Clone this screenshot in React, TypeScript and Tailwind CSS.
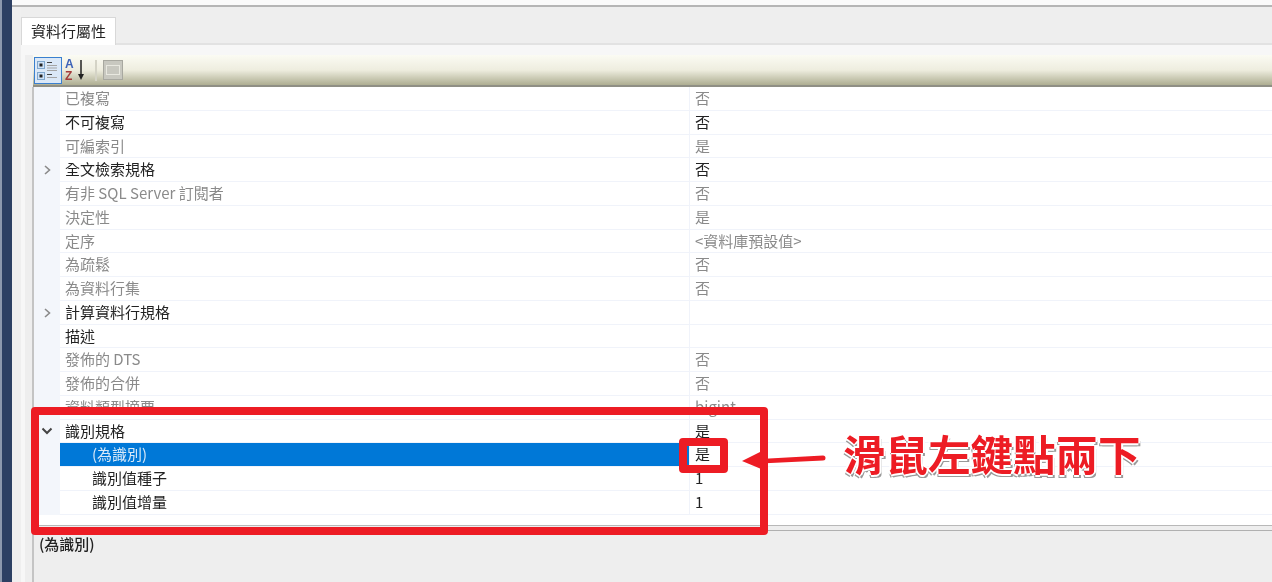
import React from 'react';

type Row = { name: string; value?: string; dim?: boolean; arrow?: 'right' | 'down'; child?: boolean; selected?: boolean };

const rows: Row[] = [
  { name: '已複寫', value: '否', dim: true },
  { name: '不可複寫', value: '否' },
  { name: '可編索引', value: '是', dim: true },
  { name: '全文檢索規格', value: '否', arrow: 'right' },
  { name: '有非 SQL Server 訂閱者', value: '否', dim: true },
  { name: '決定性', value: '是', dim: true },
  { name: '定序', value: '<資料庫預設值>', dim: true },
  { name: '為疏鬆', value: '否', dim: true },
  { name: '為資料行集', value: '否', dim: true },
  { name: '計算資料行規格', arrow: 'right' },
  { name: '描述' },
  { name: '發佈的 DTS', value: '否', dim: true },
  { name: '發佈的合併', value: '否', dim: true },
  { name: '資料類型摘要', value: 'bigint', dim: true },
  { name: '識別規格', value: '是', arrow: 'down' },
  { name: '(為識別)', value: '是', child: true, selected: true },
  { name: '識別值種子', value: '1', child: true },
  { name: '識別值增量', value: '1', child: true },
];

const PropRow = ({ row }: { row: Row }) => (
  <div className="flex h-[23.76px] text-[15px] leading-[22.76px]">
    <div className="w-[26px] shrink-0 flex items-center justify-center bg-[#f3f6fb]">
      {row.arrow === 'right' && (
        <svg width="10" height="12" viewBox="0 0 10 12" fill="none" stroke="#8a8a8a" strokeWidth="1.6">
          <path d="M3 2l4.5 4L3 10" />
        </svg>
      )}
      {row.arrow === 'down' && (
        <svg width="12" height="10" viewBox="0 0 12 10" fill="none" stroke="#444" strokeWidth="2">
          <path d="M1.5 2.5L6 7l4.5-4.5" />
        </svg>
      )}
    </div>
    <div
      className={
        'w-[629px] shrink-0 border-b border-[#f0f3fa] ' +
        (row.child ? 'pl-[32px] ' : 'pl-[5px] ') +
        (row.selected ? 'bg-[#0078d7] text-[#d8e9f8]' : row.dim ? 'text-[#8a8a8a]' : 'text-[#222]')
      }
    >
      {row.name}
    </div>
    <div
      className={
        'flex-1 border-b border-l border-[#f0f3fa] pl-[5px] ' +
        (row.dim ? 'text-[#8a8a8a]' : 'text-[#222]')
      }
    >
      {row.value}
    </div>
  </div>
);

export default function App() {
  return (
    <div
      className="relative flex w-[1272px] h-[582px] overflow-hidden bg-[#eeeeee] blur-[0.4px]"
      style={{ fontFamily: '"Noto Sans CJK TC", "Liberation Sans", sans-serif' }}
    >
      <div className="w-[2px] shrink-0 bg-[#8d99ad]" />
      <div className="w-[10px] shrink-0 bg-[#2d4063]" />
      <div className="w-[9px] shrink-0 bg-[#efefef]" />

      <div className="flex-1 flex flex-col min-w-0">
        <div className="h-[7px] shrink-0 -ml-[9px] bg-[#fafafa] border-b-2 border-[#b5b5b5]" />
        <div className="h-[38px] shrink-0 flex items-end border-b-2 border-[#e2e2e2]">
          <div className="h-[28px] w-[95px] -mb-[2px] bg-white border border-b-0 border-[#d8d8d8] text-[15px] leading-[25px] text-[#222] text-center">
            資料行屬性
          </div>
        </div>

        <div className="flex-1 flex flex-col min-h-0 border-l-4 border-[#f7f7f7] bg-[#eeeeee]">
          <div className="h-[10px] shrink-0 bg-[#f7f7f7]" />
          <div className="flex-1 flex flex-col min-h-0 ml-[8px]">
            <div className="h-[32px] shrink-0 flex items-center bg-gradient-to-b from-[#fbfbf3] via-[#eeeddf] to-[#aeae92] border-b-2 border-[#8f8f85]">
              <div className="ml-[1px] w-[28px] h-[27px] border border-[#3a7fd0] bg-[#dbe8f7] flex items-center justify-center">
                <svg width="22" height="22" viewBox="0 0 22 22">
                  <rect x="0.5" y="2.5" width="7" height="7" fill="#cfe2f7" stroke="#7fa6cc" />
                  <rect x="2.5" y="4.5" width="3" height="3" fill="#222" />
                  <rect x="0.5" y="13.5" width="7" height="7" fill="#cfe2f7" stroke="#7fa6cc" />
                  <rect x="2.5" y="15.5" width="3" height="3" fill="#222" />
                  <path d="M10 3.5h5M10 15.5h5" stroke="#444" strokeWidth="1" />
                  <path d="M10 6.5h10M10 9h10M10 11.5h10M10 18.5h10" stroke="#a5a5a5" strokeWidth="1" />
                </svg>
              </div>
              <svg width="26" height="30" viewBox="0 0 26 30" className="ml-[2px]">
                <text x="1" y="13" fontSize="12" fontWeight="700" fill="#3c62b8" fontFamily="Liberation Sans">A</text>
                <text x="1" y="25" fontSize="12" fontWeight="700" fill="#a33a3a" fontFamily="Liberation Sans">Z</text>
                <path d="M17 5v17" stroke="#222" strokeWidth="1.5" />
                <path d="M14 19l3 6 3-6z" fill="#222" />
              </svg>
              <div className="ml-[5px] w-[2px] h-[21px] bg-[#d4d3c6]" />
              <div className="ml-[6px] w-5 h-5 bg-[#c8c8c0] border border-[#a8a8a0] flex items-center justify-center">
                <div className="w-[14px] h-[10px] border border-[#e8e8e0]" />
              </div>
            </div>

            <div className="flex-1 flex flex-col min-h-0 border-l-2 border-[#c4c4c4] -ml-[1px]">
              <div className="h-[439px] shrink-0 bg-white border-b border-[#b8b8b8]">
                {rows.map((row) => (
                  <PropRow key={row.name} row={row} />
                ))}
              </div>
              <div className="flex-1 mt-[4px] pt-[3px] pl-[5px] border-t border-[#b0b0b0] text-[15px] leading-5 font-medium text-[#222]">
                (為識別)
              </div>
            </div>
          </div>
        </div>
      </div>

      <div className="absolute left-[31px] top-[407px] w-[737px] h-[128px] border-8 border-[#ed1c24] rounded-[4px]" />
      <div className="absolute left-[679px] top-[438px] w-[49px] h-[35px] border-8 border-[#ed1c24] rounded-[4px]" />

      <svg className="absolute left-[736px] top-[444px]" width="92" height="30" viewBox="0 0 92 30">
        <path d="M6 17L24 8v7L87 11.5a2.5 2.5 0 0 1 0 5L24 19.5v5z" fill="#ed1c24" />
      </svg>

      <div
        className="absolute left-[843px] top-[425px] text-[42.5px] leading-[56px] font-bold text-[#ed1c24] whitespace-nowrap"
        style={{ textShadow: '2px 0 0 #fff, -2px 0 0 #fff, 0 -2px 0 #fff, 0 2px 0 #fff, 2px 3px 0 #9a9a9a, -1px 3px 0 #9a9a9a' }}
      >
        滑鼠左鍵點兩下
      </div>
    </div>
  );
}
